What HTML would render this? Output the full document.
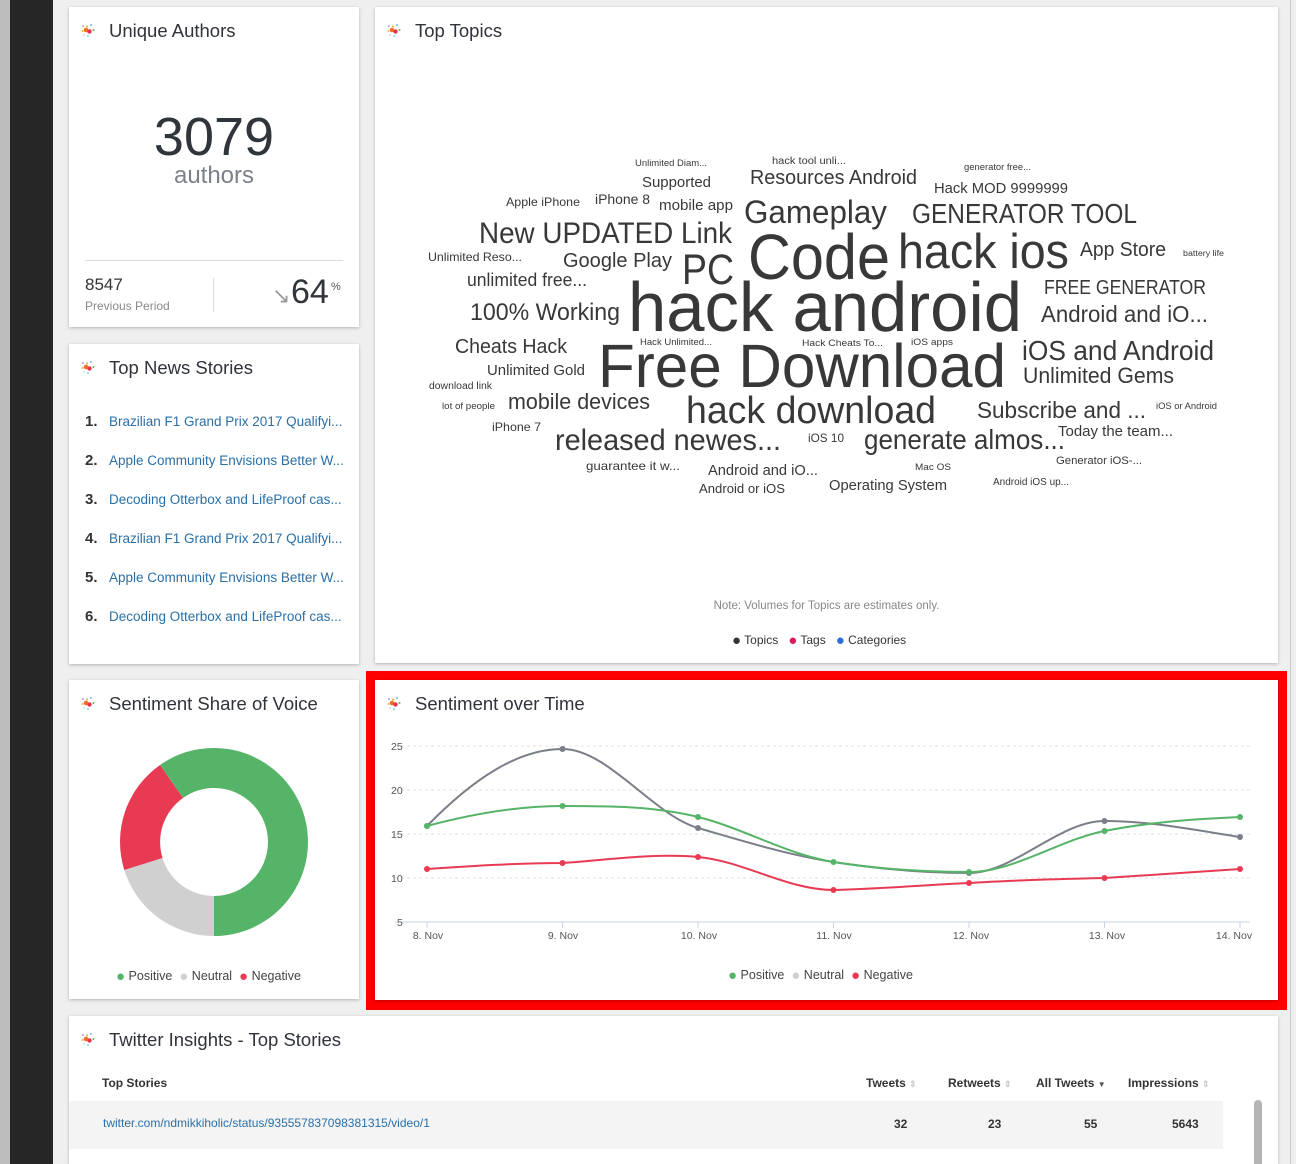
<!DOCTYPE html>
<html><head><meta charset="utf-8"><style>
*{margin:0;padding:0;box-sizing:border-box}
html,body{width:1296px;height:1164px;overflow:hidden}
body{background:#efefef;font-family:"Liberation Sans",sans-serif;position:relative;color:#333}
.card{position:absolute;background:#fff;box-shadow:0 1px 3px rgba(0,0,0,.25)}
.title{position:absolute;left:40px;top:13px;font-size:18.5px;color:#2f333a}
.ic{position:absolute;left:12px;top:17px}
.abs{position:absolute}
.dot{font-size:15px;vertical-align:-1px}
</style></head><body>
<div class="abs" style="left:0;top:0;width:10px;height:1164px;background:#bdbdbd"></div>
<div class="abs" style="left:10px;top:0;width:43px;height:1164px;background:#262626"></div>
<div class="abs" style="left:1290px;top:0;width:1px;height:1164px;background:#c8c8c8"></div>

<svg width="0" height="0" style="position:absolute"><defs><g id="icon">
<circle cx="2" cy="2" r="0.8" fill="#9b59b6"/><circle cx="10" cy="1" r="0.9" fill="#3ab0e2"/>
<circle cx="5" cy="6" r="2.3" fill="#f36f21"/><circle cx="8.5" cy="7.5" r="2.2" fill="#e8304f"/>
<circle cx="12.5" cy="6" r="1" fill="#6ab04c"/><circle cx="1.5" cy="7" r="0.9" fill="#f5a623"/>
<circle cx="7" cy="12" r="0.8" fill="#3ab0e2"/><circle cx="3" cy="11" r="0.6" fill="#999"/>
<circle cx="6" cy="2.5" r="1" fill="#f5a623"/></g></defs></svg>

<!-- Unique Authors -->
<div class="card" style="left:69px;top:7px;width:290px;height:320px">
<svg class="ic" width="14" height="14"><use href="#icon"/></svg>
<div class="title">Unique Authors</div>
<div class="abs" style="left:0;width:290px;top:100px;text-align:center;font-size:54px;color:#30343b;line-height:60px">3079</div>
<div class="abs" style="left:0;width:290px;top:155px;text-align:center;font-size:24px;color:#7b808a">authors</div>
<div class="abs" style="left:16px;top:253px;width:258px;height:1px;background:#ddd"></div>
<div class="abs" style="left:16px;top:268px;font-size:17px;color:#333">8547</div>
<div class="abs" style="left:16px;top:292px;font-size:12px;color:#888">Previous Period</div>
<div class="abs" style="left:144px;top:271px;width:1px;height:34px;background:#ddd"></div>
<div class="abs" style="left:203px;top:276px;font-size:22px;color:#999">&#8600;</div>
<div class="abs" style="left:222px;top:266px;font-size:34px;color:#30343b">64</div>
<div class="abs" style="left:262px;top:274px;font-size:11px;color:#555">%</div>
</div>

<!-- Top News -->
<div class="card" style="left:69px;top:344px;width:290px;height:320px">
<svg class="ic" width="14" height="14"><use href="#icon"/></svg>
<div class="title">Top News Stories</div>
<div class="abs" style="left:16px;top:58px;font-size:13.5px;line-height:39px;white-space:nowrap">
<div><b style="display:inline-block;width:24px;color:#333;font-size:15px">1.</b><span style="color:#2a6fa8">Brazilian F1 Grand Prix 2017 Qualifyi...</span></div>
<div><b style="display:inline-block;width:24px;color:#333;font-size:15px">2.</b><span style="color:#2a6fa8">Apple Community Envisions Better W...</span></div>
<div><b style="display:inline-block;width:24px;color:#333;font-size:15px">3.</b><span style="color:#2a6fa8">Decoding Otterbox and LifeProof cas...</span></div>
<div><b style="display:inline-block;width:24px;color:#333;font-size:15px">4.</b><span style="color:#2a6fa8">Brazilian F1 Grand Prix 2017 Qualifyi...</span></div>
<div><b style="display:inline-block;width:24px;color:#333;font-size:15px">5.</b><span style="color:#2a6fa8">Apple Community Envisions Better W...</span></div>
<div><b style="display:inline-block;width:24px;color:#333;font-size:15px">6.</b><span style="color:#2a6fa8">Decoding Otterbox and LifeProof cas...</span></div>
</div>
</div>

<!-- Top Topics -->
<div class="card" style="left:375px;top:7px;width:903px;height:656px">
<svg class="ic" width="14" height="14"><use href="#icon"/></svg>
<div class="title">Top Topics</div>
<div class="abs" style="left:0;width:903px;top:593px;text-align:center;font-size:11.5px;color:#888">Note: Volumes for Topics are estimates only.</div>
<div class="abs" style="left:357px;top:625px;font-size:12px;color:#333;white-space:nowrap">
<span class="dot" style="color:#333">&#9679;</span> Topics &nbsp;&nbsp;<span class="dot" style="color:#d81b60">&#9679;</span> Tags &nbsp;&nbsp;<span class="dot" style="color:#2d6fdc">&#9679;</span> Categories</div>
</div>
<svg class="abs" style="left:0;top:0" width="1296" height="520" font-family="Liberation Sans, sans-serif" fill="#383838">
<g>
<text x="635" y="166" font-size="9" textLength="72" lengthAdjust="spacingAndGlyphs">Unlimited Diam...</text>
<text x="772" y="164" font-size="10" textLength="74" lengthAdjust="spacingAndGlyphs">hack tool unli...</text>
<text x="964" y="170" font-size="9" textLength="67" lengthAdjust="spacingAndGlyphs">generator free...</text>
<text x="642" y="187" font-size="15" textLength="69" lengthAdjust="spacingAndGlyphs">Supported</text>
<text x="750" y="184" font-size="20" textLength="167" lengthAdjust="spacingAndGlyphs">Resources Android</text>
<text x="934" y="193" font-size="15" textLength="134" lengthAdjust="spacingAndGlyphs">Hack MOD 9999999</text>
<text x="506" y="206" font-size="12" textLength="74" lengthAdjust="spacingAndGlyphs">Apple iPhone</text>
<text x="595" y="204" font-size="14" textLength="55" lengthAdjust="spacingAndGlyphs">iPhone 8</text>
<text x="659" y="210" font-size="15" textLength="74" lengthAdjust="spacingAndGlyphs">mobile app</text>
<text x="744" y="223" font-size="32" textLength="143" lengthAdjust="spacingAndGlyphs">Gameplay</text>
<text x="912" y="223" font-size="28" textLength="225" lengthAdjust="spacingAndGlyphs">GENERATOR TOOL</text>
<text x="479" y="243" font-size="30" textLength="253" lengthAdjust="spacingAndGlyphs">New UPDATED Link</text>
<text x="748" y="279" font-size="64" textLength="142" lengthAdjust="spacingAndGlyphs">Code</text>
<text x="898" y="268" font-size="49" textLength="171" lengthAdjust="spacingAndGlyphs">hack ios</text>
<text x="1080" y="256" font-size="20" textLength="86" lengthAdjust="spacingAndGlyphs">App Store</text>
<text x="1183" y="256" font-size="8" textLength="41" lengthAdjust="spacingAndGlyphs">battery life</text>
<text x="428" y="261" font-size="12" textLength="94" lengthAdjust="spacingAndGlyphs">Unlimited Reso...</text>
<text x="563" y="267" font-size="20" textLength="109" lengthAdjust="spacingAndGlyphs">Google Play</text>
<text x="682" y="284" font-size="43" textLength="52" lengthAdjust="spacingAndGlyphs">PC</text>
<text x="467" y="286" font-size="18" textLength="120" lengthAdjust="spacingAndGlyphs">unlimited free...</text>
<text x="628" y="331" font-size="70" textLength="394" lengthAdjust="spacingAndGlyphs">hack android</text>
<text x="1044" y="294" font-size="20" textLength="162" lengthAdjust="spacingAndGlyphs">FREE GENERATOR</text>
<text x="1041" y="322" font-size="23" textLength="167" lengthAdjust="spacingAndGlyphs">Android and iO...</text>
<text x="470" y="320" font-size="24" textLength="150" lengthAdjust="spacingAndGlyphs">100% Working</text>
<text x="455" y="353" font-size="20" textLength="112" lengthAdjust="spacingAndGlyphs">Cheats Hack</text>
<text x="640" y="345" font-size="9" textLength="72" lengthAdjust="spacingAndGlyphs">Hack Unlimited...</text>
<text x="802" y="346" font-size="9" textLength="81" lengthAdjust="spacingAndGlyphs">Hack Cheats To...</text>
<text x="911" y="345" font-size="9" textLength="42" lengthAdjust="spacingAndGlyphs">iOS apps</text>
<text x="598" y="387" font-size="61" textLength="408" lengthAdjust="spacingAndGlyphs">Free Download</text>
<text x="1022" y="360" font-size="28" textLength="192" lengthAdjust="spacingAndGlyphs">iOS and Android</text>
<text x="1023" y="383" font-size="22" textLength="151" lengthAdjust="spacingAndGlyphs">Unlimited Gems</text>
<text x="487" y="375" font-size="15" textLength="98" lengthAdjust="spacingAndGlyphs">Unlimited Gold</text>
<text x="429" y="389" font-size="10" textLength="63" lengthAdjust="spacingAndGlyphs">download link</text>
<text x="442" y="409" font-size="9" textLength="53" lengthAdjust="spacingAndGlyphs">lot of people</text>
<text x="508" y="409" font-size="22" textLength="142" lengthAdjust="spacingAndGlyphs">mobile devices</text>
<text x="686" y="423" font-size="38" textLength="250" lengthAdjust="spacingAndGlyphs">hack download</text>
<text x="977" y="418" font-size="23" textLength="169" lengthAdjust="spacingAndGlyphs">Subscribe and ...</text>
<text x="1156" y="409" font-size="9" textLength="61" lengthAdjust="spacingAndGlyphs">iOS or Android</text>
<text x="492" y="431" font-size="12" textLength="49" lengthAdjust="spacingAndGlyphs">iPhone 7</text>
<text x="555" y="450" font-size="30" textLength="226" lengthAdjust="spacingAndGlyphs">released newes...</text>
<text x="808" y="442" font-size="12" textLength="36" lengthAdjust="spacingAndGlyphs">iOS 10</text>
<text x="864" y="449" font-size="28" textLength="201" lengthAdjust="spacingAndGlyphs">generate almos...</text>
<text x="1058" y="436" font-size="15" textLength="115" lengthAdjust="spacingAndGlyphs">Today the team...</text>
<text x="586" y="470" font-size="12" textLength="94" lengthAdjust="spacingAndGlyphs">guarantee it w...</text>
<text x="708" y="475" font-size="15" textLength="110" lengthAdjust="spacingAndGlyphs">Android and iO...</text>
<text x="915" y="470" font-size="9" textLength="36" lengthAdjust="spacingAndGlyphs">Mac OS</text>
<text x="1056" y="464" font-size="11" textLength="86" lengthAdjust="spacingAndGlyphs">Generator iOS-...</text>
<text x="699" y="493" font-size="13" textLength="86" lengthAdjust="spacingAndGlyphs">Android or iOS</text>
<text x="829" y="490" font-size="15" textLength="118" lengthAdjust="spacingAndGlyphs">Operating System</text>
<text x="993" y="485" font-size="10" textLength="76" lengthAdjust="spacingAndGlyphs">Android iOS up...</text>
</g></svg>

<!-- Sentiment Share of Voice -->
<div class="card" style="left:69px;top:680px;width:290px;height:319px">
<svg class="ic" width="14" height="14"><use href="#icon"/></svg>
<div class="title">Sentiment Share of Voice</div>
<svg class="abs" style="left:0;top:0" width="290" height="319">
<g transform="translate(145,162)">
<path d="M0 -94 A94 94 0 0 1 0 94 L0 54 A54 54 0 0 0 0 -54Z" fill="#55b468"/>
<path d="M0 -94 A94 94 0 0 0 -54 -77 L-31 -44 A54 54 0 0 1 0 -54Z" fill="#55b468"/>
<path d="M0 94 A94 94 0 0 1 -89.7 28 L-51.5 16 A54 54 0 0 0 0 54Z" fill="#d0d0d0"/>
<path d="M-89.7 28 A94 94 0 0 1 -54 -77 L-31 -44 A54 54 0 0 0 -51.5 16Z" fill="#e83a53"/>
</g></svg>
<div class="abs" style="left:47px;top:288px;font-size:12.5px;color:#444;white-space:nowrap"><span class="dot" style="color:#55b468">&#9679;</span> Positive &nbsp;<span class="dot" style="color:#d0d0d0">&#9679;</span> Neutral &nbsp;<span class="dot" style="color:#e83a53">&#9679;</span> Negative</div>
</div>

<!-- Sentiment over Time -->
<div class="abs" style="left:366px;top:671px;width:921px;height:339px;background:#f00"></div>
<div class="card" style="left:375px;top:680px;width:903px;height:320px">
<svg class="ic" width="14" height="14"><use href="#icon"/></svg>
<div class="title">Sentiment over Time</div>
</div>
<svg class="abs" style="left:0;top:0" width="1296" height="1000" font-family="Liberation Sans, sans-serif" font-size="10.5" fill="#555">
<g stroke="#e0e0e0" stroke-dasharray="3 3">
<line x1="395" x2="1250" y1="746" y2="746"/><line x1="395" x2="1250" y1="790" y2="790"/>
<line x1="395" x2="1250" y1="834" y2="834"/><line x1="395" x2="1250" y1="878" y2="878"/></g>
<line x1="395" x2="1250" y1="922" y2="922" stroke="#c5d3ea"/>
<g stroke="#c5d3ea"><line x1="427" x2="427" y1="922" y2="928"/><line x1="562.5" x2="562.5" y1="922" y2="928"/><line x1="698" x2="698" y1="922" y2="928"/><line x1="833.5" x2="833.5" y1="922" y2="928"/><line x1="969" x2="969" y1="922" y2="928"/><line x1="1104.5" x2="1104.5" y1="922" y2="928"/><line x1="1240" x2="1240" y1="922" y2="928"/></g>
<text x="391" y="750">25</text><text x="391" y="794">20</text><text x="391" y="838">15</text><text x="391" y="882">10</text><text x="397" y="926">5</text>
<g text-anchor="middle"><text x="428" y="939">8. Nov</text><text x="563" y="939">9. Nov</text><text x="699" y="939">10. Nov</text><text x="834" y="939">11. Nov</text><text x="971" y="939">12. Nov</text><text x="1107" y="939">13. Nov</text><text x="1234" y="939">14. Nov</text></g>
<g fill="none" stroke-width="2">
<path stroke="#7a7e88" d="M427 826 C472 780 517 749 562.5 749 C608 749 653 815 698 828 C743 841 788 855 833.5 862 C879 869 924 873 969 873 C1014 873 1059 821 1104.5 821 C1150 821 1195 830 1240 837"/>
<path stroke="#55b468" d="M427 826 C472 814 517 806 562.5 806 C608 806 653 806 698 817 C743 828 788 855 833.5 862 C879 869 924 872 969 872 C1014 872 1059 840 1104.5 831 C1150 822 1195 819 1240 817"/>
<path stroke="#e83a53" d="M427 869 C472 866 517 863 562.5 863 C608 860 653 853 698 857 C743 861 788 890 833.5 890 C879 889 924 885 969 883 C1014 880 1059 879 1104.5 878 C1150 875 1195 872 1240 869"/>
</g>
<g fill="#7a7e88"><circle cx="427" cy="826" r="3"/><circle cx="562.5" cy="749" r="3"/><circle cx="698" cy="828" r="3"/><circle cx="969" cy="873" r="3"/><circle cx="1104.5" cy="821" r="3"/><circle cx="1240" cy="837" r="3"/></g>
<g fill="#55b468"><circle cx="427" cy="826" r="3"/><circle cx="562.5" cy="806" r="3"/><circle cx="698" cy="817" r="3"/><circle cx="833.5" cy="862" r="3"/><circle cx="969" cy="872" r="3"/><circle cx="1104.5" cy="831" r="3"/><circle cx="1240" cy="817" r="3"/></g>
<g fill="#e83a53"><circle cx="427" cy="869" r="3"/><circle cx="562.5" cy="863" r="3"/><circle cx="698" cy="857" r="3"/><circle cx="833.5" cy="890" r="3"/><circle cx="969" cy="883" r="3"/><circle cx="1104.5" cy="878" r="3"/><circle cx="1240" cy="869" r="3"/></g>
</svg>
<div class="abs" style="left:728px;top:967px;font-size:12.5px;color:#444;white-space:nowrap"><span class="dot" style="color:#55b468">&#9679;</span> Positive &nbsp;<span class="dot" style="color:#d0d0d0">&#9679;</span> Neutral &nbsp;<span class="dot" style="color:#e83a53">&#9679;</span> Negative</div>

<!-- Twitter -->
<div class="card" style="left:69px;top:1016px;width:1209px;height:148px">
<svg class="ic" width="14" height="14"><use href="#icon"/></svg>
<div class="title">Twitter Insights - Top Stories</div>
<div class="abs" style="left:33px;top:60px;font-size:12px;font-weight:bold;color:#333">Top Stories</div>
<div class="abs" style="left:797px;top:60px;font-size:12px;font-weight:bold;color:#333;white-space:nowrap">Tweets <span style="color:#ccc;font-size:9px">&#8661;</span></div>
<div class="abs" style="left:879px;top:60px;font-size:12px;font-weight:bold;color:#333;white-space:nowrap">Retweets <span style="color:#ccc;font-size:9px">&#8661;</span></div>
<div class="abs" style="left:967px;top:60px;font-size:12px;font-weight:bold;color:#333;white-space:nowrap">All Tweets <span style="color:#555;font-size:8px">&#9660;</span></div>
<div class="abs" style="left:1059px;top:60px;font-size:12px;font-weight:bold;color:#333;white-space:nowrap">Impressions <span style="color:#ccc;font-size:9px">&#8661;</span></div>
<div class="abs" style="left:0;top:85px;width:1154px;height:48px;background:#f4f4f4"></div>
<div class="abs" style="left:34px;top:100px;font-size:12px;color:#2a6fa8">twitter.com/ndmikkiholic/status/935557837098381315/video/1</div>
<div class="abs" style="left:825px;top:101px;font-size:12px;font-weight:bold">32</div>
<div class="abs" style="left:919px;top:101px;font-size:12px;font-weight:bold">23</div>
<div class="abs" style="left:1015px;top:101px;font-size:12px;font-weight:bold">55</div>
<div class="abs" style="left:1103px;top:101px;font-size:12px;font-weight:bold">5643</div>
<div class="abs" style="left:1185px;top:84px;width:8px;height:70px;border-radius:4px;background:#b5b5b5"></div>
</div>
</body></html>
